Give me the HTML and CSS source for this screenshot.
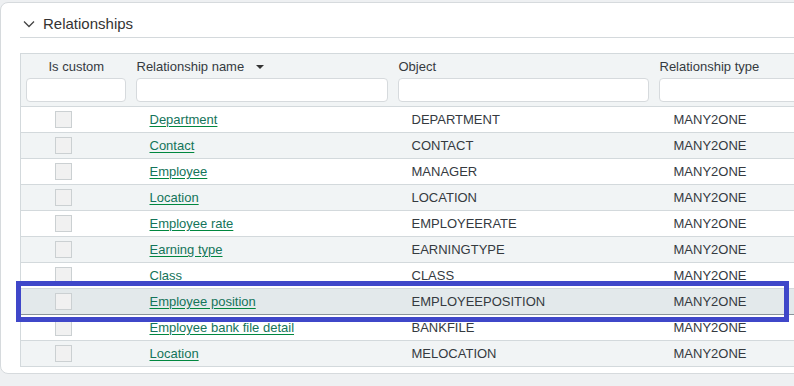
FILE: index.html
```html
<!doctype html>
<html lang="en">
<head>
    <meta charset="UTF-8">
    <title>Relationships</title>
    <link rel="stylesheet" href="styles.css">
</head>
<body>
    <div class="card">
        <div class="section-head">
            <svg class="chevron" width="12" height="8" viewBox="0 0 12 8"><path d="M1 1.5 L6 6.5 L11 1.5" fill="none" stroke="#444" stroke-width="1.3"/></svg>
            <span class="section-title">Relationships</span>
        </div>

        <div class="grid-wrap">
            <table class="grid">
                <colgroup>
                    <col class="c-custom">
                    <col class="c-name">
                    <col class="c-object">
                    <col class="c-type">
                </colgroup>
                <thead>
                    <tr>
                        <th class="center"><div class="label">Is custom</div><input type="text" class="filter"/></th>
                        <th><div class="label">Relationship name <span class="caret"></span></div><input type="text" class="filter"/></th>
                        <th><div class="label">Object</div><input type="text" class="filter"/></th>
                        <th><div class="label">Relationship type</div><input type="text" class="filter"/></th>
                    </tr>
                </thead>
                <tbody>
                    <tr><td><span class="check"></span></td><td><a href="#">Department</a></td><td>DEPARTMENT</td><td>MANY2ONE</td></tr>
                    <tr><td><span class="check"></span></td><td><a href="#">Contact</a></td><td>CONTACT</td><td>MANY2ONE</td></tr>
                    <tr><td><span class="check"></span></td><td><a href="#">Employee</a></td><td>MANAGER</td><td>MANY2ONE</td></tr>
                    <tr><td><span class="check"></span></td><td><a href="#">Location</a></td><td>LOCATION</td><td>MANY2ONE</td></tr>
                    <tr><td><span class="check"></span></td><td><a href="#">Employee rate</a></td><td>EMPLOYEERATE</td><td>MANY2ONE</td></tr>
                    <tr><td><span class="check"></span></td><td><a href="#">Earning type</a></td><td>EARNINGTYPE</td><td>MANY2ONE</td></tr>
                    <tr><td><span class="check"></span></td><td><a href="#" class="plain">Class</a></td><td>CLASS</td><td>MANY2ONE</td></tr>
                    <tr class="selected"><td><span class="check"></span></td><td><a href="#">Employee position</a></td><td>EMPLOYEEPOSITION</td><td>MANY2ONE</td></tr>
                    <tr><td><span class="check"></span></td><td><a href="#">Employee bank file detail</a></td><td>BANKFILE</td><td>MANY2ONE</td></tr>
                    <tr><td><span class="check"></span></td><td><a href="#">Location</a></td><td>MELOCATION</td><td>MANY2ONE</td></tr>
                </tbody>
            </table>
            <div class="highlight"></div>
        </div>
    </div>
</body>
</html>
```

FILE: styles.css
```css
html, body {
    overflow: hidden;
}
body {
    margin: 0;
    background-color: #eef0f2;
    font-family: 'Liberation Sans', Arial, sans-serif;
    color: #353a3f;
}
.card {
    width: 820px;
    height: 372px;
    margin-top: 2px;
    background-color: #ffffff;
    border: 1px solid #d6dadd;
    border-radius: 8px;
    box-sizing: border-box;
    padding: 0 0 0 19px;
}
.section-head {
    display: flex;
    align-items: center;
    height: 28px;
    padding-top: 6px;
    border-bottom: 1px solid #d4d9dc;
}
.chevron {
    margin-left: 3px;
    margin-right: 8px;
    margin-top: 1px;
}
.section-title {
    font-size: 15px;
    color: #333333;
}
.grid-wrap {
    position: relative;
    margin-top: 15px;
}
.grid {
    border-collapse: collapse;
    table-layout: fixed;
    width: 800px;
    font-size: 13px;
    border-left: 1px solid #d3d9dc;
}
.c-custom { width: 110px; }
.c-name { width: 262px; }
.c-object { width: 261px; }
.c-type { width: 167px; }
thead tr {
    background-color: #f1f4f5;
    border-top: 1px solid #d3d9dc;
    border-bottom: 1px solid #d3d9dc;
}
th {
    text-align: left;
    font-weight: normal;
    padding: 5px 5px 4px 5px;
    vertical-align: top;
}
th .label {
    height: 19px;
    line-height: 15px;
    padding-left: 1px;
    color: #353a3f;
}
th.center .label {
    text-align: center;
}
.caret {
    display: inline-block;
    width: 0;
    height: 0;
    margin-left: 8px;
    vertical-align: 2px;
    border-left: 4px solid transparent;
    border-right: 4px solid transparent;
    border-top: 4px solid #333;
}
.filter {
    display: block;
    width: 100%;
    height: 24px;
    box-sizing: border-box;
    border: 1px solid #d6dadd;
    border-radius: 4px;
    background-color: #ffffff;
    margin: 0;
}
tbody tr {
    height: 26px;
    border-bottom: 1px solid #d3d9dc;
}
tbody tr:nth-child(even) {
    background-color: #f1f4f5;
}
tbody tr.selected {
    background-color: #e3e9eb;
    border-top: 1px solid #8a949a;
    border-bottom: 1px solid #8a949a;
}
td {
    padding: 0 0 0 19px;
    height: 25px;
    vertical-align: middle;
    white-space: nowrap;
}
td:first-child {
    padding-left: 34px;
}
td:last-child {
    padding-left: 20px;
}
.check {
    display: block;
    width: 15px;
    height: 15px;
    background-color: #f1f1f1;
    border: 1px solid #cbd0d2;
}
a {
    color: #14745a;
    text-decoration: underline;
    text-decoration-color: #00873f;
    text-underline-offset: 2px;
}
a.plain {
    text-decoration: none;
}
.highlight {
    position: absolute;
    left: -4px;
    top: 228px;
    width: 763px;
    height: 31px;
    border: 5px solid #3f47c9;
    pointer-events: none;
}
```
